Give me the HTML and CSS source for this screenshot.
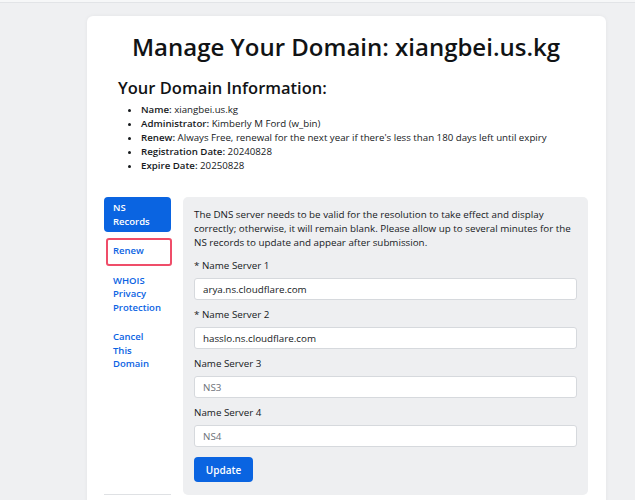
FILE: index.html
```html
<!DOCTYPE html>
<html lang="en">
<head>
<meta charset="utf-8">
<title>Manage Your Domain</title>
<link rel="stylesheet" href="styles.css">
</head>
<body>
<div class="page">
  <div class="card">
    <h1 class="title">Manage Your Domain: xiangbei.us.kg</h1>
    <div class="info">
      <h2 class="info-heading">Your Domain Information:</h2>
      <ul class="info-list">
        <li><b>Name:</b> xiangbei.us.kg</li>
        <li><b>Administrator:</b> Kimberly M Ford (w_bin)</li>
        <li><b>Renew:</b> Always Free, renewal for the next year if there's less than 180 days left until expiry</li>
        <li><b>Registration Date:</b> 20240828</li>
        <li><b>Expire Date:</b> 20250828</li>
      </ul>
    </div>
    <div class="manage">
      <nav class="side-nav">
        <a class="nav-link active" href="#">NS Records</a>
        <a class="nav-link marked" href="#">Renew</a>
        <a class="nav-link" href="#">WHOIS Privacy Protection</a>
        <a class="nav-link" href="#">Cancel This Domain</a>
      </nav>
      <form class="panel">
        <p class="panel-note">The DNS server needs to be valid for the resolution to take effect and display correctly; otherwise, it will remain blank. Please allow up to several minutes for the NS records to update and appear after submission.</p>
        <div class="field">
          <label class="field-label">* Name Server 1</label>
          <input class="field-input" type="text" value="arya.ns.cloudflare.com">
        </div>
        <div class="field">
          <label class="field-label">* Name Server 2</label>
          <input class="field-input" type="text" value="hasslo.ns.cloudflare.com">
        </div>
        <div class="field">
          <label class="field-label">Name Server 3</label>
          <input class="field-input" type="text" placeholder="NS3">
        </div>
        <div class="field">
          <label class="field-label">Name Server 4</label>
          <input class="field-input" type="text" placeholder="NS4">
        </div>
        <button class="btn-update" type="button">Update</button>
      </form>
    </div>
  </div>
</div>
</body>
</html>
```
FILE: styles.css
```css
* { box-sizing: border-box; }

html, body {
  margin: 0;
  padding: 0;
  background: #f6f7f8;
  font-family: "Open Sans", "Liberation Sans", sans-serif;
  color: #16191c;
}

.page {
  margin-top: 2px;
  border-top: 1px solid #e2e4e7;
  background: #eff0f2;
  min-height: 498px;
  padding-top: 13px;
  overflow: hidden;
}

.card {
  margin-left: 87px;
  width: 519px;
  background: #ffffff;
  border-radius: 6px;
  padding: 16px 18px 0 17px;
  box-shadow: 0 0 4px rgba(0, 0, 0, 0.05);
  height: 500px;
}

.title {
  margin: 0;
  text-align: center;
  font-size: 24px;
  line-height: 30px;
  font-weight: 600;
  color: #111315;
}

.info {
  padding-left: 14px;
  margin-top: 14px;
}

.info-heading {
  margin: 0;
  font-size: 16.5px;
  line-height: 24px;
  font-weight: 600;
  color: #111315;
}

.info-list {
  margin: 3px 0 0;
  padding-left: 23px;
  font-size: 9.7px;
  line-height: 14px;
}

.info-list b { font-weight: 600; }

.manage {
  display: flex;
  gap: 12px;
  margin-top: 24px;
}

.side-nav {
  width: 67px;
  flex: none;
  display: flex;
  flex-direction: column;
  gap: 8px;
  border-bottom: 1px solid #dfe1e4;
}

.nav-link {
  position: relative;
  display: block;
  padding: 4px 9px;
  font-size: 9.5px;
  line-height: 13.5px;
  font-weight: 600;
  color: #0b63e3;
  text-decoration: none;
  border-radius: 4px;
}

.nav-link.active {
  background: #0a64e1;
  color: #ffffff;
}

.nav-link.marked::after {
  content: "";
  position: absolute;
  left: 2px;
  right: -1px;
  top: -2px;
  bottom: -4px;
  border: 2px solid #ef4d69;
  border-radius: 3px;
}

.panel {
  flex: 1;
  background: #eeeff1;
  border-radius: 5px;
  padding: 11px 11px 13px;
}

.panel-note {
  margin: 0 0 9px;
  font-size: 9.8px;
  line-height: 14px;
}

.field { margin-bottom: 8px; }

.field-label {
  display: block;
  font-size: 9.8px;
  line-height: 14px;
  margin-bottom: 5px;
}

.field-input {
  display: block;
  width: 100%;
  height: 22px;
  border: 1px solid #d6d9dd;
  border-radius: 3px;
  background: #ffffff;
  padding: 0 8px;
  font-family: inherit;
  font-size: 9.8px;
  color: #16191c;
}

.field-input::placeholder { color: #6b7178; }

.btn-update {
  margin-top: 2px;
  height: 25px;
  width: 59px;
  padding: 0;
  border: none;
  border-radius: 4px;
  background: #0a64e1;
  color: #ffffff;
  font-family: inherit;
  font-size: 10px;
  font-weight: 600;
}
```
